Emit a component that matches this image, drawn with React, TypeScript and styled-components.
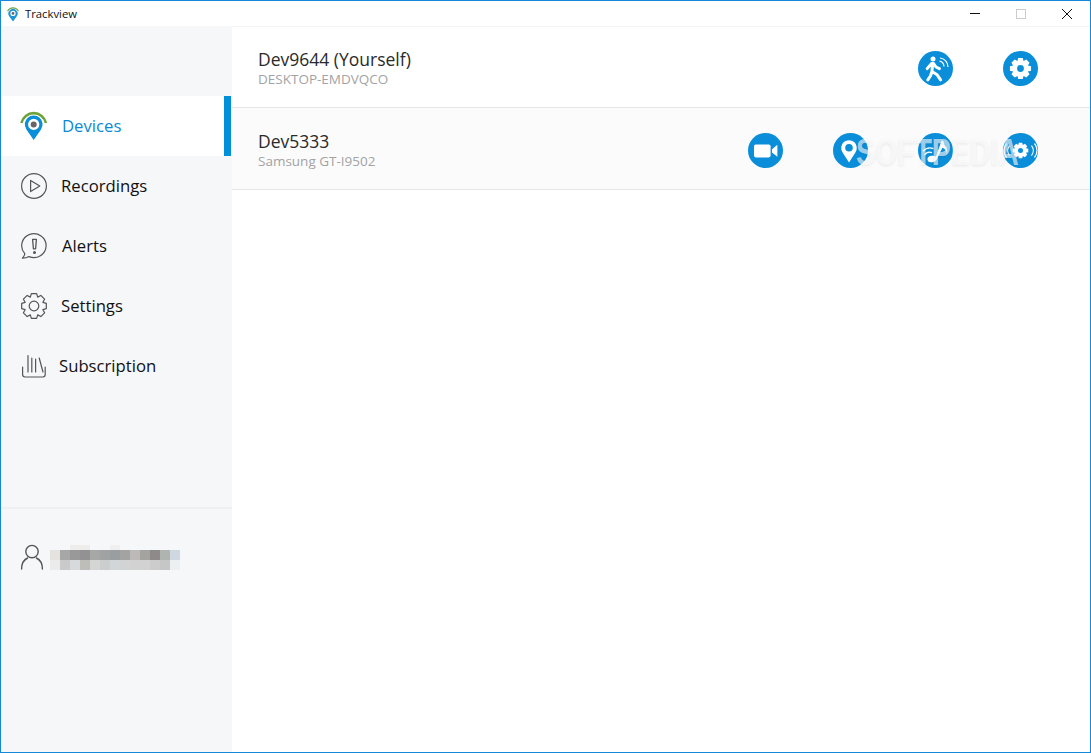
import React from "react";
import styled, { createGlobalStyle } from "styled-components";

const Global = createGlobalStyle`
  html, body, #root { margin: 0; padding: 0; height: 100%; }
  body { font-family: "Open Sans", "Noto Sans", sans-serif; background: #fff; overflow: hidden; }
`;

const BLUE = "#0a8ed9";

const Window = styled.div`
  position: relative;
  box-sizing: border-box;
  height: 100vh;
  display: flex;
  flex-direction: column;
  border: 1px solid #1588da;
  overflow: hidden;
`;
const TitleBar = styled.header`
  height: 25px;
  box-sizing: border-box;
  flex: none;
  display: flex;
  align-items: center;
  padding-left: 4px;
  background: #fff;
`;
const AppTitle = styled.span`
  font-size: 11.3px;
  color: #111;
  margin-left: 4px;
  margin-top: -1px;
  flex: 1;
`;
const WinControl = styled.div`
  width: 46px;
  height: 25px;
  display: flex;
  align-items: center;
  justify-content: center;
`;
const Body = styled.div`
  flex: 1;
  display: flex;
  min-height: 0;
`;
const Sidebar = styled.aside`
  width: 231px;
  flex: none;
  display: flex;
  flex-direction: column;
  background: #f6f7f9;
  padding-top: 70px;
  box-sizing: border-box;
`;
const Nav = styled.nav`
  display: flex;
  flex-direction: column;
  height: 411px;
`;
const NavItem = styled.div<{ $active?: boolean }>`
  height: 60px;
  box-sizing: border-box;
  display: flex;
  align-items: center;
  padding-left: 18px;
  margin-right: 1px;
  background: ${(p) => (p.$active ? "#fff" : "transparent")};
  border-right: ${(p) => (p.$active ? `7px solid #0090d9` : "0")};
  color: ${(p) => (p.$active ? "#0a8ad6" : "#111")};
`;
const NavIcon = styled.span`
  width: 30px;
  height: 32px;
  flex: none;
  display: flex;
  align-items: center;
  justify-content: center;
`;
const NavLabel = styled.span<{ $gap: number }>`
  font-size: 16.7px;
  margin-left: ${(p) => p.$gap}px;
  margin-top: -2px;
`;
const Footer = styled.div`
  border-top: 2px solid #eff0f2;
  flex: 1;
  display: flex;
  align-items: flex-start;
  padding: 35px 0 0 19px;
`;
const Pixels = styled.div`
  display: grid;
  grid-template-columns: repeat(13, 10px);
  grid-template-rows: 5px 10px 10px;
  margin-left: 6px;
  margin-top: 1px;
`;
const Pixel = styled.i<{ $c: string }>`
  display: block;
  background: ${(p) => p.$c};
`;
const Main = styled.main`
  flex: 1;
  display: flex;
  flex-direction: column;
  min-width: 0;
  background: #fff;
  border-top: 1px solid #f4f4f4;
`;
const DeviceRow = styled.section<{ $shaded?: boolean; $first?: boolean }>`
  height: ${(p) => (p.$first ? 81 : 82)}px;
  box-sizing: border-box;
  display: flex;
  align-items: center;
  justify-content: space-between;
  padding: ${(p) => (p.$first ? 2 : 3)}px 52px 0 26px;
  background: ${(p) => (p.$shaded ? "#fbfbfb" : "#fff")};
  border-bottom: 1px solid #e6e6e6;
`;
const DeviceInfo = styled.div`
  display: flex;
  flex-direction: column;
`;
const DeviceName = styled.div`
  font-size: 17.5px;
  line-height: 22px;
  color: #2a2a2a;
`;
const DeviceSub = styled.div`
  font-size: 13.5px;
  line-height: 18px;
  color: #a3a3a3;
`;
const Actions = styled.div`
  display: flex;
  gap: 50px;
`;
const RoundButton = styled.span`
  width: 35px;
  height: 35px;
  display: block;
  border-radius: 50%;
  background: ${BLUE};
`;
const Watermark = styled.div`
  position: absolute;
  left: 855px;
  top: 130px;
  font-family: "Liberation Sans", sans-serif;
  font-weight: 700;
  font-size: 36px;
  line-height: 44px;
  color: rgba(255, 255, 255, 0.62);
  text-shadow: 0 1px 3px rgba(0, 0, 0, 0.08);
  transform: scaleX(0.79);
  transform-origin: left center;
  pointer-events: none;
`;

const gearPath = (cx: number, cy: number, rOut: number, rIn: number, teeth = 8) => {
  const pts: string[] = [];
  const step = (Math.PI * 2) / teeth;
  for (let i = 0; i < teeth; i++) {
    const a = i * step - Math.PI / 2;
    [
      [rIn, -0.5],
      [rOut, -0.27],
      [rOut, 0.27],
      [rIn, 0.5],
    ].forEach(([r, o]) => {
      const t = a + o * step;
      pts.push(`${(cx + r * Math.cos(t)).toFixed(2)} ${(cy + r * Math.sin(t)).toFixed(2)}`);
    });
  }
  return `M${pts.join("L")}Z`;
};

const TitleLogo = () => (
  <svg width="16" height="18" viewBox="0 0 16 18">
    <path d="M2.6 6.2A6 6 0 0 1 13.4 6.2" fill="none" stroke="#74a548" strokeWidth="1.2" />
    <path d="M8 16.5 4.2 11.2A4.6 4.6 0 1 1 11.8 11.2Z" fill="#1b95d6" />
    <circle cx="8" cy="8.4" r="2.6" fill="#fff" />
    <circle cx="8" cy="8.4" r="1.4" fill="#666" />
  </svg>
);

const DevicesIcon = () => (
  <svg width="30" height="32" viewBox="0 0 30 32">
    <path d="M2.4 13A12.6 12.6 0 0 1 27 13" fill="none" stroke="#6fa23b" strokeWidth="2.6" />
    <path d="M14.7 30 7.4 19.4A8.9 8.9 0 1 1 22 19.4Z" fill="#0a8ed9" />
    <circle cx="14.7" cy="14.4" r="5.6" fill="#fff" />
    <circle cx="14.7" cy="14.4" r="3" fill="#666" />
  </svg>
);
const RecordingsIcon = () => (
  <svg width="28" height="28" viewBox="0 0 28 28" fill="none" stroke="#555" strokeWidth="1.2">
    <circle cx="14" cy="14" r="12.4" />
    <path d="M10.6 8.4 19.8 14 10.6 19.6Z" strokeLinejoin="round" />
  </svg>
);
const AlertsIcon = () => (
  <svg width="28" height="28" viewBox="0 0 28 28" fill="none" stroke="#555" strokeWidth="1.2">
    <path d="M4.8 21.6A12.2 12 0 1 1 9 24.6C7 25.8 4.6 26.2 2.4 26.2 3.6 25 4.6 23.4 4.8 21.6Z" strokeLinejoin="round" />
    <path d="M12.6 7.4H16.4L15.6 16.8H13.4Z" strokeWidth="1.3" strokeLinejoin="round" />
    <circle cx="14.5" cy="20.4" r="1.5" fill="#555" stroke="none" />
  </svg>
);
const SettingsIcon = () => (
  <svg width="28" height="28" viewBox="0 0 28 28" fill="none" stroke="#555" strokeWidth="1.2" strokeLinejoin="round">
    <path d={gearPath(14, 14, 12.6, 9.6)} />
    <circle cx="14" cy="14" r="4.8" />
  </svg>
);
const SubscriptionIcon = () => (
  <svg width="26" height="26" viewBox="0 0 26 26" fill="none" stroke="#555" strokeWidth="1.2" strokeLinecap="round">
    <path d="M1.6 14V21.6Q1.6 24 4 24H22Q24.2 24 24.2 21.6V14" />
    <path d="M7 2.6V19M10.8 5V19M14.6 6V19M18.2 5 22 19" />
  </svg>
);
const UserIcon = () => (
  <svg width="24" height="26" viewBox="0 0 24 26" fill="none" stroke="#555" strokeWidth="1.4" strokeLinecap="round">
    <circle cx="12" cy="7.6" r="6.2" />
    <path d="M1.6 25C1.6 19 4.2 15.6 7.6 14M22.4 25C22.4 19 19.8 15.6 16.4 14" />
  </svg>
);

const Glyph = ({ children }: { children: React.ReactNode }) => (
  <svg width="35" height="35" viewBox="0 0 35 35" style={{ display: "block" }}>
    {children}
  </svg>
);
const Gear = ({ cx = 17.5, cy = 17.5, s = 1 }: { cx?: number; cy?: number; s?: number }) => (
  <path
    d={gearPath(cx, cy, 10.8 * s, 8 * s) + `M${cx + 3.4 * s} ${cy}A${3.4 * s} ${3.4 * s} 0 1 0 ${cx - 3.4 * s} ${cy}A${3.4 * s} ${3.4 * s} 0 1 0 ${cx + 3.4 * s} ${cy}Z`}
    fill="#fff"
    fillRule="evenodd"
  />
);
const WalkGlyph = () => (
  <Glyph>
    <circle cx="15" cy="8" r="2.5" fill="#fff" />
    <path
      d="M14.6 12.4 14 20M13.4 12.6 9.2 17.6M15.6 12.6 18 16 21.4 17.6M14 20.4 12.4 25 9.8 28.8M14 20.4 18.8 23.4 22.6 28.8"
      fill="none"
      stroke="#fff"
      strokeWidth="3"
      strokeLinecap="round"
      strokeLinejoin="round"
    />
    <path d="M21.5 10A6 6 0 0 1 26 15.5M22 7A9 9 0 0 1 30 16" fill="none" stroke="#fff" strokeWidth="1.2" />
  </Glyph>
);
const GearGlyph = () => (
  <Glyph>
    <Gear />
  </Glyph>
);
const CameraGlyph = () => (
  <Glyph>
    <rect x="6" y="11.4" width="16.6" height="13" rx="1.8" fill="#fff" />
    <path d="M24 16.2 29.4 11.8V23.8L24 19.4Z" fill="#fff" />
  </Glyph>
);
const PinGlyph = () => (
  <Glyph>
    <path
      d="M16 29.4 9.6 19.4A7.8 7.8 0 1 1 22.4 19.4ZM19.8 14.8A3.8 3.8 0 1 0 12.2 14.8A3.8 3.8 0 1 0 19.8 14.8Z"
      fill="#fff"
      fillRule="evenodd"
    />
  </Glyph>
);
const MusicGlyph = () => (
  <Glyph>
    <ellipse cx="14" cy="26" rx="4.6" ry="3.2" fill="#fff" transform="rotate(-12 14 26)" />
    <path d="M17 26.4 23.6 7.6 25.4 8C25.6 12 30.4 13.6 29 21.4 28.6 17.6 26.6 15.4 24.4 14.8L18.6 26.6Z" fill="#fff" />
    <path d="M6.4 22A6.4 6.4 0 0 1 14 19.6M5 18.2A9.6 9.6 0 0 1 15.4 15.6" fill="none" stroke="#fff" strokeWidth="1.3" />
  </Glyph>
);
const GearWavesGlyph = () => (
  <Glyph>
    <Gear s={0.74} />
    <path
      d="M6.5 12.5A8 8 0 0 0 6.5 22.5M3.5 10.5A11 11 0 0 0 3.5 24.5M28.5 12.5A8 8 0 0 1 28.5 22.5M31.5 10.5A11 11 0 0 1 31.5 24.5"
      fill="none"
      stroke="#fff"
      strokeWidth="1.2"
    />
  </Glyph>
);

const blur: (string | null)[][] = [
  [null, null, "#eeedeb", "#eeedeb", null, null, "#f0f0f0", null, null, null, null, null, null],
  ["#e4e3df", "#a6a7a6", "#9a9999", "#939193", "#a5a8a5", "#a0a2a4", "#999ea0", "#a3a3a1", "#bcb9b8", "#a5a3a0", "#8f8a8a", "#b0b4ae", "#cfd8e0"],
  ["#ebebeb", "#cacaca", "#d6dadc", "#bfbdba", "#d4d6d4", "#cccdcf", "#d1d6d9", "#d2d3d3", "#d3d2d2", "#d3d2d2", "#cdcccc", "#c5c6c6", "#ecf0f3"],
];

const navItems = [
  { label: "Devices", icon: <DevicesIcon />, gap: 13, active: true },
  { label: "Recordings", icon: <RecordingsIcon />, gap: 12 },
  { label: "Alerts", icon: <AlertsIcon />, gap: 13 },
  { label: "Settings", icon: <SettingsIcon />, gap: 12 },
  { label: "Subscription", icon: <SubscriptionIcon />, gap: 10 },
];

export default function App() {
  return (
    <>
      <Global />
      <Window>
        <TitleBar>
          <TitleLogo />
          <AppTitle>Trackview</AppTitle>
          <WinControl>
            <svg width="10" height="10" viewBox="0 0 10 10">
              <path d="M0 4.5H10" stroke="#111" strokeWidth="1" />
            </svg>
          </WinControl>
          <WinControl>
            <svg width="10" height="10" viewBox="0 0 10 10">
              <rect x="0.5" y="0.5" width="9" height="9" fill="none" stroke="#ccc" />
            </svg>
          </WinControl>
          <WinControl>
            <svg width="10" height="10" viewBox="0 0 10 10">
              <path d="M0 0 10 10M10 0 0 10" stroke="#111" strokeWidth="1" />
            </svg>
          </WinControl>
        </TitleBar>
        <Body>
          <Sidebar>
            <Nav>
              {navItems.map((n) => (
                <NavItem key={n.label} $active={n.active}>
                  <NavIcon>{n.icon}</NavIcon>
                  <NavLabel $gap={n.gap}>{n.label}</NavLabel>
                </NavItem>
              ))}
            </Nav>
            <Footer>
              <UserIcon />
              <Pixels>
                {blur.flatMap((row, r) =>
                  row.map((c, i) => <Pixel key={`${r}-${i}`} $c={c ?? "transparent"} />)
                )}
              </Pixels>
            </Footer>
          </Sidebar>
          <Main>
            <DeviceRow $first>
              <DeviceInfo>
                <DeviceName>Dev9644 (Yourself)</DeviceName>
                <DeviceSub>DESKTOP-EMDVQCO</DeviceSub>
              </DeviceInfo>
              <Actions>
                <RoundButton><WalkGlyph /></RoundButton>
                <RoundButton><GearGlyph /></RoundButton>
              </Actions>
            </DeviceRow>
            <DeviceRow $shaded>
              <DeviceInfo>
                <DeviceName>Dev5333</DeviceName>
                <DeviceSub>Samsung GT-I9502</DeviceSub>
              </DeviceInfo>
              <Actions>
                <RoundButton><CameraGlyph /></RoundButton>
                <RoundButton><PinGlyph /></RoundButton>
                <RoundButton><MusicGlyph /></RoundButton>
                <RoundButton><GearWavesGlyph /></RoundButton>
              </Actions>
            </DeviceRow>
          </Main>
        </Body>
        <Watermark>SOFTPEDIA</Watermark>
      </Window>
    </>
  );
}
